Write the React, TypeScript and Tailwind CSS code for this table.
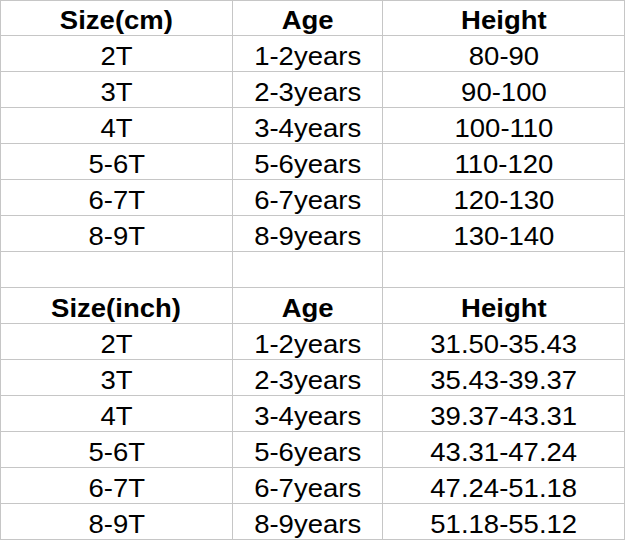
import React from "react";

const cm = [
  ["2T", "1-2years", "80-90"],
  ["3T", "2-3years", "90-100"],
  ["4T", "3-4years", "100-110"],
  ["5-6T", "5-6years", "110-120"],
  ["6-7T", "6-7years", "120-130"],
  ["8-9T", "8-9years", "130-140"],
];

const inch = [
  ["2T", "1-2years", "31.50-35.43"],
  ["3T", "2-3years", "35.43-39.37"],
  ["4T", "3-4years", "39.37-43.31"],
  ["5-6T", "5-6years", "43.31-47.24"],
  ["6-7T", "6-7years", "47.24-51.18"],
  ["8-9T", "8-9years", "51.18-55.12"],
];

function Cell({ text, bold, first }: { text: string; bold?: boolean; first?: boolean }) {
  return (
    <div
      className={`bg-white flex items-center justify-center pt-[5px] ${first ? "h-[34px]" : "h-[35px]"}`}
    >
      <span
        className={`inline-block scale-x-[1.1] text-[25px] leading-none text-black ${bold ? "font-bold" : ""}`}
      >
        {text}
      </span>
    </div>
  );
}

export default function App() {
  const rows: { cells: string[]; bold?: boolean }[] = [
    { cells: ["Size(cm)", "Age", "Height"], bold: true },
    ...cm.map((c) => ({ cells: c })),
    { cells: ["", "", ""] },
    { cells: ["Size(inch)", "Age", "Height"], bold: true },
    ...inch.map((c) => ({ cells: c })),
  ];

  return (
    <div className="w-[627px] h-[543px] bg-white" style={{ fontFamily: '"Liberation Sans", Arial, sans-serif' }}>
      <div className="grid grid-cols-[231px_149px_241px] gap-px bg-[#c6c6c6] p-px w-[625px]">
        {rows.map((r, i) =>
          r.cells.map((t, j) => <Cell key={`${i}-${j}`} text={t} bold={r.bold} first={i === 0} />)
        )}
      </div>
    </div>
  );
}
